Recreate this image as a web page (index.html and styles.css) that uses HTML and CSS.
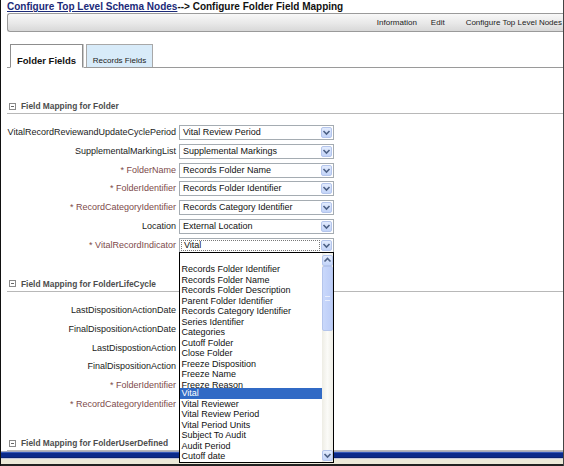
FILE: index.html
```html
<!DOCTYPE html>
<html>
<head>
<meta charset="utf-8">
<link rel="stylesheet" href="styles.css">
</head>
<body>
<div class="frame">
  <div class="title"><a href="#" class="crumb">Configure Top Level Schema Nodes</a>--&gt; Configure Folder Field Mapping</div>
  <div class="navbar">
    <span class="nav-item">Information</span>
    <span class="nav-item nav-edit">Edit</span>
    <span class="nav-item nav-last">Configure Top Level Nodes</span>
  </div>
  <div class="tabs">
    <div class="tab tab-active">Folder Fields</div>
    <div class="tab tab-idle">Records Fields</div>
  </div>

  <div class="section-head sh-first"><span class="toggle"></span>Field Mapping for Folder</div>
  <div class="form-grid">
    <div class="label">VitalRecordReviewandUpdateCyclePeriod</div>
    <div class="combo"><span class="combo-text">Vital Review Period</span><span class="combo-btn"><svg width="11" height="11" viewBox="0 0 11 11"><path d="M2.5 4 L5.5 7 L8.5 4" fill="none" stroke="#4d6185" stroke-width="1.6"/></svg></span></div>

    <div class="label">SupplementalMarkingList</div>
    <div class="combo"><span class="combo-text">Supplemental Markings</span><span class="combo-btn"><svg width="11" height="11" viewBox="0 0 11 11"><path d="M2.5 4 L5.5 7 L8.5 4" fill="none" stroke="#4d6185" stroke-width="1.6"/></svg></span></div>

    <div class="label req">* FolderName</div>
    <div class="combo"><span class="combo-text">Records Folder Name</span><span class="combo-btn"><svg width="11" height="11" viewBox="0 0 11 11"><path d="M2.5 4 L5.5 7 L8.5 4" fill="none" stroke="#4d6185" stroke-width="1.6"/></svg></span></div>

    <div class="label req">* FolderIdentifier</div>
    <div class="combo"><span class="combo-text">Records Folder Identifier</span><span class="combo-btn"><svg width="11" height="11" viewBox="0 0 11 11"><path d="M2.5 4 L5.5 7 L8.5 4" fill="none" stroke="#4d6185" stroke-width="1.6"/></svg></span></div>

    <div class="label req">* RecordCategoryIdentifier</div>
    <div class="combo"><span class="combo-text">Records Category Identifier</span><span class="combo-btn"><svg width="11" height="11" viewBox="0 0 11 11"><path d="M2.5 4 L5.5 7 L8.5 4" fill="none" stroke="#4d6185" stroke-width="1.6"/></svg></span></div>

    <div class="label">Location</div>
    <div class="combo"><span class="combo-text">External Location</span><span class="combo-btn"><svg width="11" height="11" viewBox="0 0 11 11"><path d="M2.5 4 L5.5 7 L8.5 4" fill="none" stroke="#4d6185" stroke-width="1.6"/></svg></span></div>

    <div class="label req">* VitalRecordIndicator</div>
    <div class="combo combo-open"><span class="combo-text combo-focus">Vital</span><span class="combo-btn"><svg width="11" height="11" viewBox="0 0 11 11"><path d="M2.5 4 L5.5 7 L8.5 4" fill="none" stroke="#4d6185" stroke-width="1.6"/></svg></span>
      <div class="dropdown">
        <div class="options">
          <div class="opt opt-blank"></div>
          <div class="opt">Records Folder Identifier</div>
          <div class="opt">Records Folder Name</div>
          <div class="opt">Records Folder Description</div>
          <div class="opt">Parent Folder Identifier</div>
          <div class="opt">Records Category Identifier</div>
          <div class="opt">Series Identifier</div>
          <div class="opt">Categories</div>
          <div class="opt">Cutoff Folder</div>
          <div class="opt">Close Folder</div>
          <div class="opt">Freeze Disposition</div>
          <div class="opt">Freeze Name</div>
          <div class="opt opt-clipped">Freeze Reason</div>
          <div class="opt opt-selected">Vital</div>
          <div class="opt">Vital Reviewer</div>
          <div class="opt">Vital Review Period</div>
          <div class="opt">Vital Period Units</div>
          <div class="opt">Subject To Audit</div>
          <div class="opt">Audit Period</div>
          <div class="opt">Cutoff date</div>
        </div>
        <div class="scrollbar">
          <div class="sb-btn"><svg width="11" height="11" viewBox="0 0 11 11"><path d="M2.5 6.5 L5.5 3.5 L8.5 6.5" fill="none" stroke="#4d6185" stroke-width="1.6"/></svg></div>
          <div class="sb-thumb"><span class="grip"></span></div>
          <div class="sb-btn sb-down"><svg width="11" height="11" viewBox="0 0 11 11"><path d="M2.5 4 L5.5 7 L8.5 4" fill="none" stroke="#4d6185" stroke-width="1.6"/></svg></div>
        </div>
      </div>
    </div>
  </div>

  <div class="section-head"><span class="toggle"></span>Field Mapping for FolderLifeCycle</div>
  <div class="form-grid">
    <div class="label">LastDispositionActionDate</div>
    <div class="combo"></div>
    <div class="label">FinalDispositionActionDate</div>
    <div class="combo"></div>
    <div class="label">LastDispostionAction</div>
    <div class="combo"></div>
    <div class="label">FinalDispositionAction</div>
    <div class="combo"></div>
    <div class="label req">* FolderIdentifier</div>
    <div class="combo"></div>
    <div class="label req">* RecordCategoryIdentifier</div>
    <div class="combo"></div>
  </div>

  <div class="section-head"><span class="toggle"></span>Field Mapping for FolderUserDefined</div>
  <div class="statusbar"></div>
</div>
</body>
</html>
```
FILE: styles.css
```css
* {
  box-sizing: border-box;
  margin: 0;
  padding: 0;
}

body {
  margin: 0;
  background: #fff;
  font-family: "Liberation Sans", Arial, sans-serif;
  color: #1a1a1a;
}

.frame {
  width: 564px;
  height: 466px;
  border-left: 1px solid #111;
  border-right: 1px solid #444;
  position: relative;
  overflow: hidden;
  background: #fff;
}

.title {
  height: 13px;
  line-height: 13px;
  padding-left: 6px;
  font-size: 10px;
  font-weight: bold;
  color: #111;
  white-space: nowrap;
}

.crumb {
  color: #1b2a78;
  text-decoration: underline;
}

.navbar {
  height: 19px;
  margin-left: 6px;
  border: 1px solid #9a9a9a;
  border-right: none;
  border-radius: 3px 0 0 3px;
  background: linear-gradient(#f8f8f8, #e8e8e8 55%, #d8d8d8);
  display: flex;
  justify-content: flex-end;
  align-items: center;
  padding-right: 1px;
  font-size: 8px;
  color: #222;
  white-space: nowrap;
}

.nav-edit {
  margin-left: 14px;
}

.nav-last {
  margin-left: 21px;
}

.tabs {
  margin-top: 12px;
  margin-left: 6px;
  padding-left: 3px;
  height: 24px;
  border-bottom: 1px solid #9a9a9a;
  display: flex;
  align-items: flex-end;
}

.tab {
  text-align: center;
  white-space: nowrap;
  padding-top: 10px;
  line-height: 11px;
}

.tab-active {
  width: 73px;
  height: 24px;
  margin-bottom: -1px;
  border: 1px solid #8d8d8d;
  border-bottom: 1px solid #fff;
  background: #fff;
  box-shadow: 1px 0 0 #c8c8c8;
  font-size: 9.5px;
  font-weight: bold;
  color: #111;
  position: relative;
}

.tab-idle {
  width: 67px;
  height: 23px;
  margin-left: 3px;
  border: 1px solid #a8a8a8;
  border-bottom: none;
  background: #d8ebf9;
  font-size: 8px;
  color: #222;
}

.section-head {
  margin-top: 24px;
  margin-left: 6px;
  height: 15px;
  line-height: 14px;
  border-bottom: 1px solid #b8b8b8;
  padding-left: 2px;
  font-size: 8.4px;
  font-weight: bold;
  color: #4d4d4d;
  white-space: nowrap;
  display: flex;
  align-items: center;
}

.sh-first {
  margin-top: 31px;
}

.toggle {
  width: 7px;
  height: 7px;
  border: 1px solid #8a8a8a;
  margin-right: 5px;
  position: relative;
  background: #fff;
}

.toggle::after {
  content: "";
  position: absolute;
  left: 1px;
  top: 2px;
  width: 3px;
  height: 1px;
  background: #666;
}

.form-grid {
  margin-top: 11px;
  display: grid;
  grid-template-columns: 175px 155px;
  column-gap: 3px;
  grid-auto-rows: 15px;
  row-gap: 3.83px;
}

.label {
  font-size: 9px;
  line-height: 15px;
  text-align: right;
  white-space: nowrap;
  color: #1a1a1a;
}

.req {
  color: #7d4a4a;
}

.combo {
  height: 15px;
  border: 1px solid #a5acb2;
  background: #fff;
  display: flex;
  align-items: center;
  position: relative;
}

.combo-text {
  flex: 1;
  padding-left: 3px;
  font-size: 9px;
  line-height: 13px;
  white-space: nowrap;
  overflow: hidden;
  color: #111;
}

.combo-focus {
  height: 11px;
  line-height: 9px;
  margin: 0 1px 0 1px;
  border: 1px dotted #777;
  padding-left: 2px;
}

.combo-btn {
  width: 11px;
  height: 11px;
  margin-right: 1px;
  border: 1px solid #b4c5ec;
  border-radius: 2px;
  background: linear-gradient(#e2ebfd, #c3d4f8);
  display: flex;
}

.combo-btn svg,
.sb-btn svg {
  display: block;
  margin: -1px;
}

.dropdown {
  position: absolute;
  top: 13px;
  left: -1px;
  width: 155px;
  height: 211px;
  border: 1px solid #000;
  background: #fff;
  display: flex;
  z-index: 5;
}

.options {
  flex: 1;
  display: flex;
  flex-direction: column;
  overflow: hidden;
}

.opt {
  height: 10.5px;
  line-height: 10.5px;
  font-size: 9px;
  padding-left: 1.5px;
  white-space: nowrap;
  overflow: hidden;
  color: #111;
  flex-shrink: 0;
}

.opt-blank {
  height: 11.5px;
}

.opt-clipped {
  height: 8.5px;
}

.opt-selected {
  background: #316ac5;
  color: #fff;
}

.scrollbar {
  width: 11px;
  display: flex;
  flex-direction: column;
  padding: 1px 0;
  background: linear-gradient(to right, #eeede5, #fbfbf8 50%, #eeede5);
}

.sb-btn {
  width: 11px;
  height: 11px;
  border: 1px solid #b4c5ec;
  border-radius: 2px;
  background: linear-gradient(#e2ebfd, #c3d4f8);
  display: flex;
  margin-top: 1px;
}

.sb-thumb {
  height: 65px;
  border: 1px solid #b4c5ec;
  border-radius: 2px;
  background: linear-gradient(to right, #c9d8fb, #bccdf7);
  display: flex;
  align-items: center;
  justify-content: center;
}

.grip {
  width: 5px;
  height: 5px;
  border-top: 1px solid #e8eefd;
  border-bottom: 1px solid #e8eefd;
}

.sb-down {
  margin-top: auto;
  margin-bottom: 0;
}

.statusbar {
  height: 15px;
  background: linear-gradient(to bottom,
    #a4a8bc 0px, #a4a8bc 1px,
    #3457b8 1px, #3457b8 2px,
    #0b2a8a 2px, #0b2a8a 6px,
    #0a2270 6px, #0a2270 7px,
    #c4c7da 7px, #c4c7da 8px,
    #ece9d8 8px, #ece9d8 13px,
    #222 13px, #222 15px);
}
```
